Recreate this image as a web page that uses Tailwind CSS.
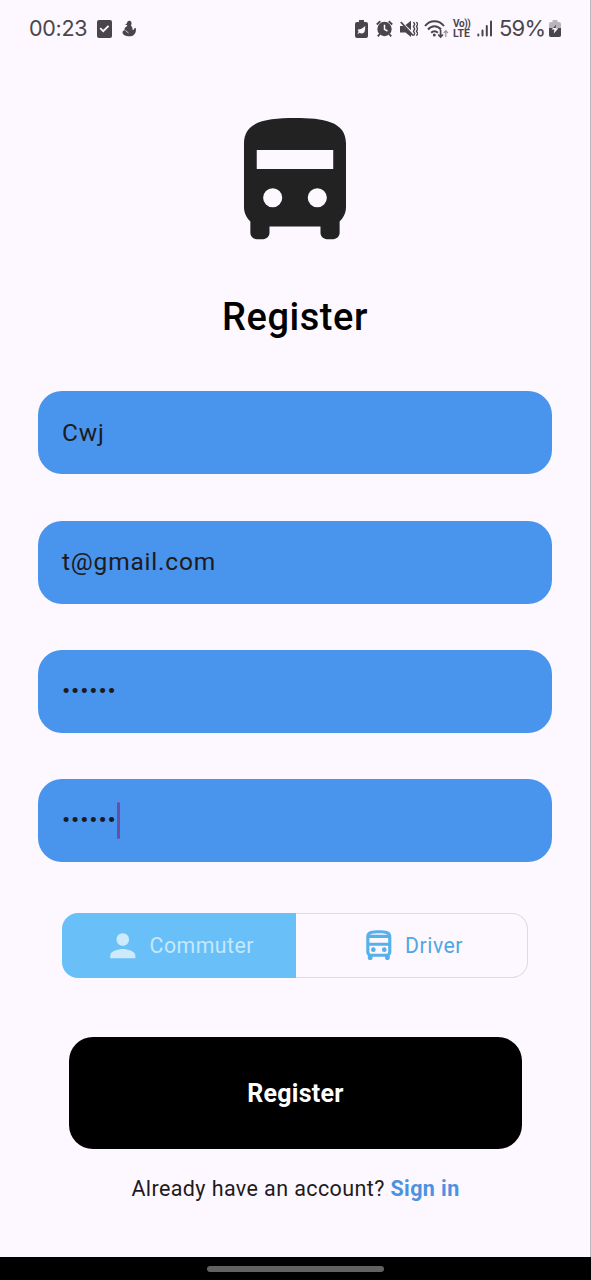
<!DOCTYPE html>
<html lang="en">
<head>
<meta charset="utf-8">
<title>Register</title>
<script src="https://cdn.jsdelivr.net/npm/@tailwindcss/browser@4"></script>
</head>
<body class="bg-[#fdf7ff] font-['Roboto',sans-serif] text-[#1d1b20]">
<div class="flex h-[1280px] w-[591px] flex-col overflow-hidden">
  <main class="flex h-[1257px] flex-col items-center border-r border-[#bdb9c0]">
    <header class="flex h-[57px] w-full shrink-0 items-center pl-[29px] pr-[29px] text-[#48464b]">
      <span class="font-['Inter',sans-serif] w-[68px] text-[21.500px] tracking-[-0.3px]">00:23</span>
      <svg class="h-[18px] w-[15px]" viewBox="0 0 15 18"><rect width="15" height="18" rx="2" fill="currentColor"/><path d="M3.2 8.2l3 3 5.4-5.4" fill="none" stroke="#fdf7ff" stroke-width="1.9"/></svg>
      <svg class="ml-[10px] h-[17px] w-[15px]" viewBox="0 0 15 17" fill="currentColor"><path d="M3 4.8L5 3.300C5 1.500 6.200.5 7.700.8 9.500 1.200 10 3 9.200 4.700 8.900 5.700 9.500 6 10 7c.8 1.500.3 2.800.9 3.300 1.100-.6 1.300-1.900 2.300-2.500.9.3.8 1.600.7 2.600-.3 3.500-2.700 5.800-6.400 5.800C3.600 16.200.5 14.700.5 12.400c0-1.400 1.200-2.300 2.400-2.200C1.800 8.800 3.500 6.700 5 6.200L5.200 5z"/><path d="M3.500 10.500l3 2.500" fill="none" stroke="#fdf7ff" stroke-width=".8"/></svg>
      <div class="ml-auto flex items-center">
        <svg class="h-[18px] w-[13px]" viewBox="0 0 13 18"><path d="M4 0h5v2h2q2 0 2 2v12q0 2-2 2H2q-2 0-2-2V4q0-2 2-2h2z" fill="currentColor"/><path d="M2.800 9.500Q6 9.800 10.200 6q.4 7.500-3.500 7.500-1.300 0-2.200-.8L3 14l-.4-.8 1.100-1.200q-.9-1.300-.9-2.500z" fill="#fdf7ff"/></svg>
        <svg class="ml-[8px] h-[18px] w-[17px]" viewBox="0 0 17 18"><circle cx="8.500" cy="9" r="7.200" fill="currentColor"/><path d="M.8 4.500L4.300 1.300M16.200 4.500l-3.500-3.200M3.800 14l-2 2.300M13.200 14l2 2.300" stroke="currentColor" stroke-width="1.900"/><path d="M8.500 4.800v4.500l3 1.700" fill="none" stroke="#fdf7ff" stroke-width="1.500"/></svg>
        <svg class="ml-[7px] h-[18px] w-[18px]" viewBox="0 0 18 18"><path d="M0 6h3.500L11 13.500V17l-5.500-4.500H0zM5.500 5L11 .8v9.500z" fill="currentColor"/><path d="M.8 2L13 15.500" stroke="currentColor" stroke-width="1.800"/><path d="M13.500 2l1.200 2.300-1.200 2.300 1.200 2.300-1.200 2.300 1.200 2.300-1.200 2.300M16.500 2l1.200 2.300-1.200 2.300 1.200 2.300-1.200 2.300 1.200 2.300-1.200 2.300" fill="none" stroke="currentColor" stroke-width="1.400"/></svg>
        <svg class="ml-[6px] h-[20px] w-[26px]" viewBox="0 0 26 20" fill="none" stroke="currentColor"><path d="M1 7C6 .5 15 .5 20 7M4 10.500c3.700-4.400 9.300-4.400 13 0M7.200 13.700c1.900-2 4.700-2 6.600 0" stroke-width="2"/><circle cx="10.300" cy="16" r="1.500" fill="currentColor" stroke="none"/><path d="M16.600 11v7M14.200 15.500l2.400 2.500 2.400-2.500" stroke-width="1.700"/><path d="M21.800 18v-6.500M19.700 14l2.100-2.300 2.100 2.300" stroke="#98959b" stroke-width="1.200"/></svg>
        <div class="ml-[3px] flex w-[19px] flex-col text-[10.500px] leading-[9px] font-bold"><span class="h-[9px] whitespace-nowrap text-[10px] leading-[8px] tracking-[-0.4px]">Vo))</span><span class="h-[9px] text-[10.500px] leading-[10px]">LTE</span></div>
        <svg class="ml-[5px] h-[17px] w-[16px]" viewBox="0 0 16 17" stroke="currentColor" stroke-width="2" stroke-linecap="round"><path d="M1.300 14.500v1M5.500 10.500v5M9.800 6v9.500M14 1.500v14"/></svg>
        <span class="ml-[6px] w-[48px] whitespace-nowrap font-['Inter',sans-serif] text-[22px] tracking-[-0.8px]">59%</span>
        <svg class="ml-[2px] h-[17px] w-[12px]" viewBox="0 0 12 17"><path d="M3.500 0h5v2H10q2 0 2 2v11q0 2-2 2H2q-2 0-2-2V4q0-2 2-2h1.500z" fill="#b9b6bb"/><path d="M0 8h12v7q0 2-2 2H2q-2 0-2-2z" fill="currentColor"/><path d="M7.200 4.500L2.600 9.600h2.800L4.800 13.500 9.400 8.300H6.700z" fill="#fdf7ff"/><path d="M7.200 4.500L4 8h2.700z" fill="#48464b"/></svg>
      </div>
    </header>
    <svg class="mt-[48px] size-[153px] shrink-0 text-[#222]" viewBox="0.08 -0.05 24 24" fill="currentColor" fill-rule="evenodd"><path d="M4 16c0 .88.39 1.670 1 2.220V20c0 .55.45 1 1 1h1c.55 0 1-.45 1-1v-1h8v1c0 .55.45 1 1 1h1c.55 0 1-.45 1-1v-1.780c.61-.55 1-1.340 1-2.220V6c0-3.500-3.580-4-8-4s-8 .5-8 4v10zM6 7h12v3H6zM8.500 13a1.500 1.500 0 1 0 0 3 1.500 1.500 0 0 0 0-3zM15.500 13a1.500 1.500 0 1 0 0 3 1.500 1.500 0 0 0 0-3z"/></svg>
    <h1 class="mt-[34px] text-[38px] leading-[50px] font-medium tracking-[0.55px] text-black">Register</h1>
    <form class="mt-[49.400px] flex w-[514px] flex-col gap-[46.300px] text-[24.500px] tracking-[0.8px]">
      <div class="flex h-[83px] items-center rounded-[24px] bg-[#4994ec] px-[24px]">Cwj</div>
      <div class="flex h-[83px] items-center rounded-[24px] bg-[#4994ec] px-[24px]">t@gmail.com</div>
      <div class="flex h-[83px] items-center rounded-[24px] bg-[#4994ec] px-[24px]"><span class="tracking-[0.850px]">••••••</span></div>
      <div class="flex h-[83px] items-center rounded-[24px] bg-[#4994ec] px-[24px]"><span class="tracking-[0.850px]">••••••</span><i class="h-[37px] w-[3px] rounded-full bg-[#6650a4]"></i></div>
    </form>
    <div class="mt-[50.500px] flex h-[65px] w-[466px] shrink-0 text-[21.250px] tracking-[0.5px]">
      <div class="flex w-[234px] items-center rounded-l-[16px] bg-[#69c0f9] pt-[2px] pl-[42px] text-[#c5e8fb]"><svg class="size-[37.600px]" viewBox="0 0 24 24" fill="#cdeafc"><path d="M12 12c2.210 0 4-1.790 4-4s-1.790-4-4-4-4 1.790-4 4 1.790 4 4 4zm0 2c-2.670 0-8 1.340-8 4v2h16v-2c0-2.660-5.330-4-8-4z"/></svg><span class="ml-[8px]">Commuter</span></div>
      <div class="flex flex-1 items-center rounded-r-[16px] border border-l-0 border-[#dedae1] pt-[2px] pl-[63.500px] text-[#4fa8e2]"><svg class="size-[37.600px]" viewBox="0 0 24 24" fill="#56b0ea"><path fill-rule="evenodd" d="M12 2c-4.420 0-8 .5-8 4v10c0 .88.39 1.670 1 2.220V20c0 .55.45 1 1 1h1c.55 0 1-.45 1-1v-1h8v1c0 .55.45 1 1 1h1c.55 0 1-.45 1-1v-1.780c.61-.55 1-1.340 1-2.220V6c0-3.500-3.580-4-8-4zm5.660 2.990H6.340C6.890 4.460 8.310 4 12 4s5.110.46 5.660.99zm.34 2V10H6V6.990h12zm-.34 9.740l-.29.27H6.630l-.29-.27C6.210 16.620 6 16.370 6 16v-4h12v4c0 .37-.21.62-.34.73z"/><circle cx="8.500" cy="14.500" r="1.500"/><circle cx="15.500" cy="14.500" r="1.500"/></svg><span class="ml-[8px]">Driver</span></div>
    </div>
    <button class="mt-[59px] flex h-[112px] w-[453px] shrink-0 items-center justify-center rounded-[24px] bg-black pt-[2px] pl-px text-[25px] font-bold tracking-[0.250px] text-white">Register</button>
    <p class="mt-[25px] pl-px text-[21.500px] leading-[30px] tracking-[0.400px] whitespace-nowrap">Already have an account? <a class="font-bold text-[#4c92df]">Sign in</a></p>
  </main>
  <footer class="flex h-[23px] justify-center bg-black pt-[9px]"><div class="h-[6px] w-[177px] rounded-full bg-[#626262]"></div></footer>
</div>
</body>
</html>
